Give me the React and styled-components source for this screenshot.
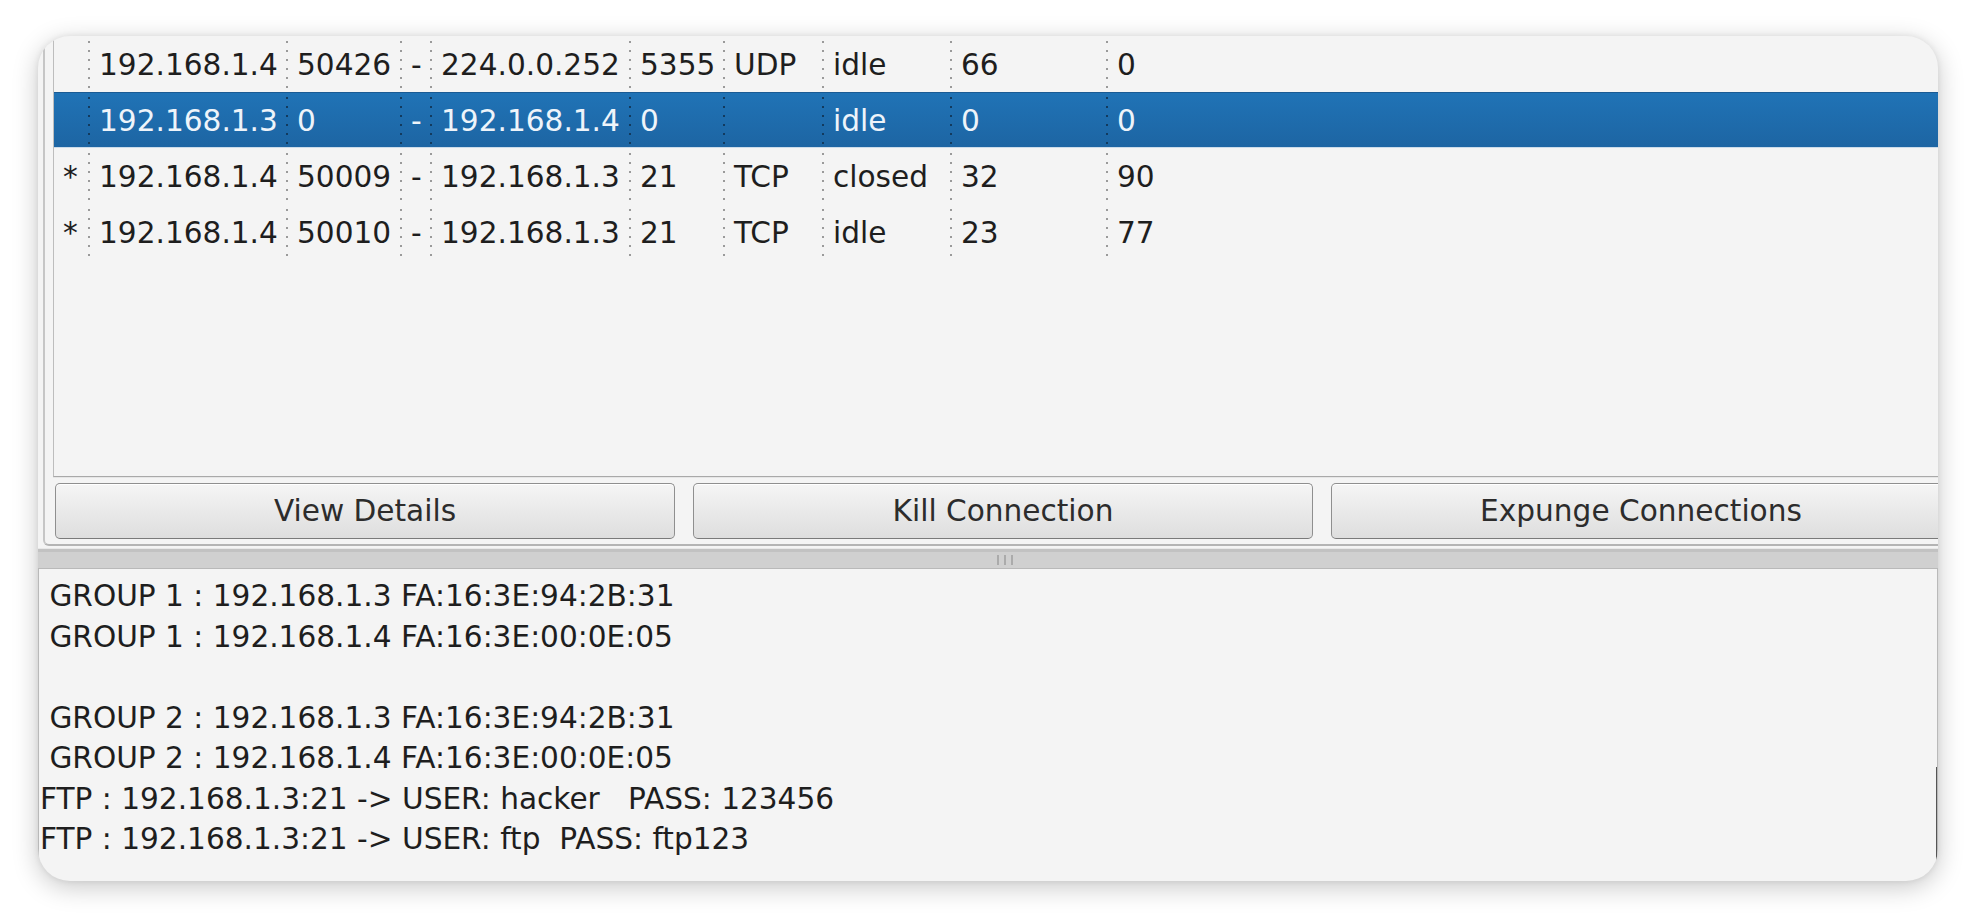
import styled, { createGlobalStyle } from 'styled-components';

const GlobalStyle = createGlobalStyle`
  html, body {
    margin: 0;
    padding: 0;
    background: #ffffff;
  }
  body {
    font-family: "DejaVu Sans", "Liberation Sans", sans-serif;
  }
`;

const Pagina = styled.div`
  width: 1974px;
  height: 918px;
  padding: 36px 0 0 38px;
  box-sizing: border-box;
  overflow: hidden;
`;

const Janela = styled.section`
  width: 1900px;
  height: 845px;
  background: #f4f4f4;
  border-radius: 32px;
  overflow: hidden;
  box-shadow: 0 6px 26px rgba(0, 0, 0, 0.22), 0 0 6px rgba(0, 0, 0, 0.08);
  display: flex;
  flex-direction: column;
  font-size: 29.6px;
  color: #1e1e1e;
`;

const PainelSuperior = styled.div`
  margin-left: 5px;
  height: 510px;
  box-sizing: border-box;
  border-left: 2px solid #c6c6c6;
  border-bottom: 2px solid #b4b4b4;
  border-bottom-left-radius: 6px;
  padding: 0 0 5px 8px;
  display: flex;
  flex-direction: column;
`;

const Arvore = styled.div`
  flex: 1;
  border-left: 1px solid #bdbdbd;
  border-bottom: 1px solid #a9a9a9;
  box-shadow: 0 1px 0 #e6e6e6;
  overflow: hidden;
`;

const Linha = styled.div`
  display: grid;
  grid-template-columns: 34px 198px 114px 30px 199px 94px 99px 128px 156px 1fr;
  height: 56px;
  box-sizing: border-box;
  line-height: 56px;
  color: ${(p) => (p.$sel ? '#eef4fa' : '#1e1e1e')};
  background: ${(p) =>
    p.$sel ? 'linear-gradient(#2073b6, #1d65a3)' : 'transparent'};
  border-top: 1px solid ${(p) => (p.$sel ? '#1a5b94' : 'transparent')};
  border-bottom: 1px solid ${(p) => (p.$sel ? '#cbdbea' : 'transparent')};
`;

const Celula = styled.div`
  padding-left: ${(p) => (p.$marca ? '9px' : '11px')};
  white-space: nowrap;
  overflow: hidden;
  background-image: ${(p) =>
    p.$marca
      ? 'none'
      : `repeating-linear-gradient(to bottom, ${
          p.$sel ? '#123a5e' : '#9a9a9a'
        } 0 2px, transparent 2px 9px)`};
  background-size: 2px 100%;
  background-repeat: no-repeat;
  background-position: 0 4px;
`;

const LinhaBotoes = styled.div`
  display: flex;
  gap: 18px;
  padding: 6px 0 0 2px;
`;

const Botao = styled.button`
  flex: 0 0 620px;
  height: 56px;
  font-family: inherit;
  font-size: 29.6px;
  color: #2c2c2c;
  border: 1px solid #8f8f8f;
  border-bottom-color: #7a7a7a;
  border-radius: 5px;
  background: linear-gradient(#f5f5f5, #dedede);
  box-shadow: inset 0 1px 0 #ffffff;
  padding: 0;
  cursor: pointer;
`;

const Divisor = styled.div`
  height: 20px;
  margin-top: 2px;
  background: #d0d0d0;
  border-top: 1px solid #e8e8e8;
  box-shadow: inset 0 3px 0 #c2c2c2;
  display: flex;
  justify-content: center;
  align-items: center;
  gap: 5px;
  padding: 3px 0 0 34px;
  box-sizing: border-box;
`;

const Alca = styled.span`
  width: 2px;
  height: 10px;
  background: #ababab;
`;

const AreaTexto = styled.div`
  position: relative;
  flex: 1;
  border: 1px solid #b9b9b9;
  border-bottom: none;
  padding: 7px 0 0 1px;
  line-height: 40.5px;
  white-space: pre;
  color: #1e1e1e;

  &::after {
    content: '';
    position: absolute;
    right: 0;
    top: 198px;
    width: 1px;
    height: 98px;
    background: #555555;
  }
`;

const conexoes = [
  { marca: '', cels: ['192.168.1.4', '50426', '-', '224.0.0.252', '5355', 'UDP', 'idle', '66', '0'] },
  { marca: '', sel: true, cels: ['192.168.1.3', '0', '-', '192.168.1.4', '0', '', 'idle', '0', '0'] },
  { marca: '*', cels: ['192.168.1.4', '50009', '-', '192.168.1.3', '21', 'TCP', 'closed', '32', '90'] },
  { marca: '*', cels: ['192.168.1.4', '50010', '-', '192.168.1.3', '21', 'TCP', 'idle', '23', '77'] },
];

const saida = [
  ' GROUP 1 : 192.168.1.3 FA:16:3E:94:2B:31',
  ' GROUP 1 : 192.168.1.4 FA:16:3E:00:0E:05',
  '',
  ' GROUP 2 : 192.168.1.3 FA:16:3E:94:2B:31',
  ' GROUP 2 : 192.168.1.4 FA:16:3E:00:0E:05',
  'FTP : 192.168.1.3:21 -> USER: hacker   PASS: 123456',
  'FTP : 192.168.1.3:21 -> USER: ftp  PASS: ftp123',
];

function App() {
  return (
    <Pagina>
      <GlobalStyle />
      <Janela>
        <PainelSuperior>
          <Arvore>
            {conexoes.map((c, i) => (
              <Linha key={i} $sel={c.sel}>
                <Celula $marca>{c.marca}</Celula>
                {c.cels.map((t, j) => (
                  <Celula key={j} $sel={c.sel}>
                    {t}
                  </Celula>
                ))}
              </Linha>
            ))}
          </Arvore>
          <LinhaBotoes>
            <Botao>View Details</Botao>
            <Botao>Kill Connection</Botao>
            <Botao>Expunge Connections</Botao>
          </LinhaBotoes>
        </PainelSuperior>
        <Divisor>
          <Alca />
          <Alca />
          <Alca />
        </Divisor>
        <AreaTexto>
          {saida.map((l, i) => (
            <div key={i}>{l || ' '}</div>
          ))}
        </AreaTexto>
      </Janela>
    </Pagina>
  );
}

export default App;
